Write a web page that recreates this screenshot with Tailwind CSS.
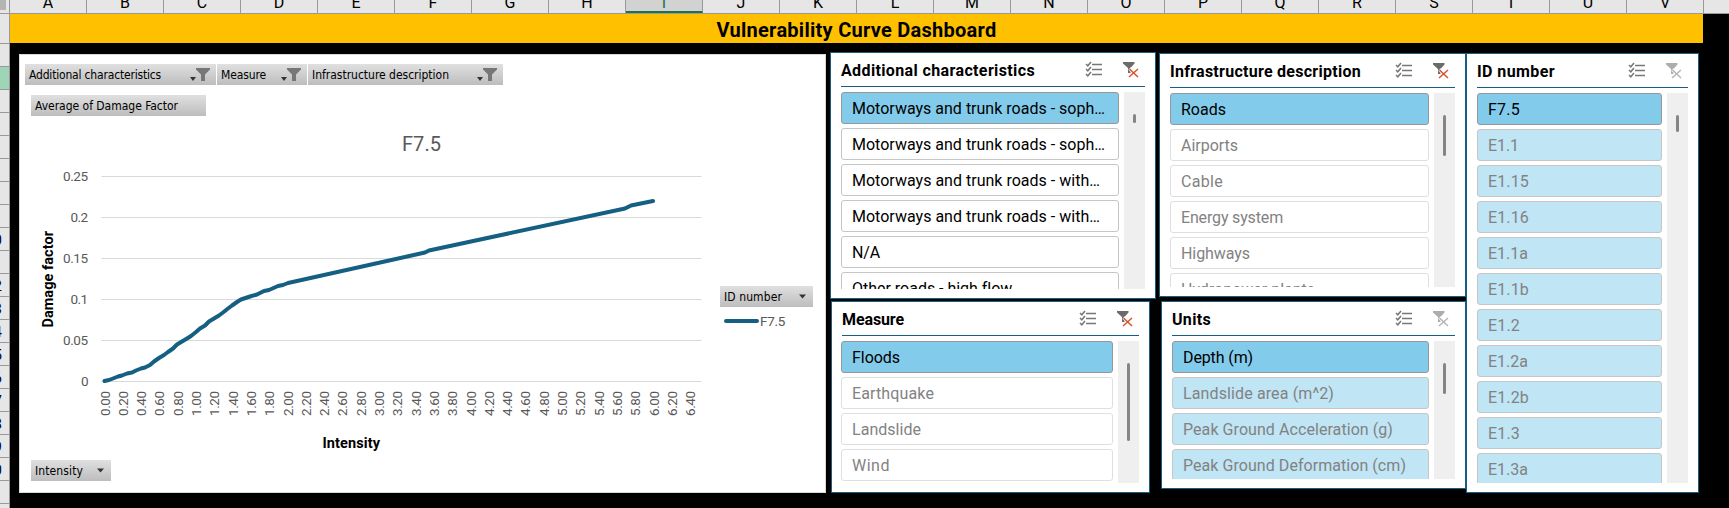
<!DOCTYPE html>
<html lang="en">
<head>
<meta charset="utf-8">
<title>Vulnerability Curve Dashboard</title>
<script src="https://cdn.jsdelivr.net/npm/@tailwindcss/browser@4"></script>
</head>
<body class="w-[1729px] h-[508px] overflow-hidden bg-black font-[Roboto,sans-serif] text-black">
<div class="flex h-[14px] overflow-hidden bg-[#e6e6e6] border-b border-[#999]">
  <div class="w-[10px] shrink-0 border-r border-[#999]"><div class="w-[6px] h-[10px] bg-[#b4b4b4]"></div></div>
  <div id="cols" class="flex h-[13px]"></div>
</div>
<div class="flex h-[494px]">
  <div id="rows" class="w-[10px] shrink-0 bg-[#e6e6e6] border-r border-[#999] overflow-hidden"></div>
  <div class="flex-1">
    <div class="w-[1693px] h-[29px] bg-[#ffc000] flex justify-center">
      <h1 class="text-[20px] font-bold leading-[32px] whitespace-nowrap" data-w="280">Vulnerability Curve Dashboard</h1>
    </div>
    <main class="flex items-start">
      <section class="ml-[9px] mt-[11px] w-[807px] h-[439px] bg-white border border-[#d9d9d9] pt-[9px] font-['DejaVu_Sans_Condensed','DejaVu_Sans',sans-serif] text-[12px]">
        <div class="flex gap-px pl-[5px]">
          <div class="w-[191px] h-[21px] bg-linear-to-b from-[#e0e0e0] to-[#bdbdbd] flex items-center justify-between pl-[4px] pr-[5px]"><span data-w="132">Additional characteristics</span><svg width="21" height="15"><path d="M0 10h6l-3 4z" fill="#333"/><path d="M6 1h14v1.500l-5 5V14h-4V7.500l-5-5z" fill="#777"/></svg></div>
          <div class="w-[90px] h-[21px] bg-linear-to-b from-[#e0e0e0] to-[#bdbdbd] flex items-center justify-between pl-[4px] pr-[5px]"><span data-w="45">Measure</span><svg width="21" height="15"><path d="M0 10h6l-3 4z" fill="#333"/><path d="M6 1h14v1.500l-5 5V14h-4V7.500l-5-5z" fill="#777"/></svg></div>
          <div class="w-[195px] h-[21px] bg-linear-to-b from-[#e0e0e0] to-[#bdbdbd] flex items-center justify-between pl-[4px] pr-[5px]"><span data-w="137">Infrastructure description</span><svg width="21" height="15"><path d="M0 10h6l-3 4z" fill="#333"/><path d="M6 1h14v1.500l-5 5V14h-4V7.500l-5-5z" fill="#777"/></svg></div>
        </div>
        <div class="ml-[11px] mt-[10px] w-[175px] h-[21px] bg-linear-to-b from-[#e0e0e0] to-[#bdbdbd] flex items-center pl-[4px]"><span data-w="143">Average of Damage Factor</span></div>
        <div class="flex h-[344px]">
          <svg id="chart" class="shrink-0" width="700" height="344" viewBox="20 116 700 344" font-family="Roboto, sans-serif" font-size="13.5" fill="#595959">
            <text x="402" y="151" font-size="20" textLength="39">F7.5</text>
            <g id="grid"></g>
            <polyline fill="none" stroke="#156082" stroke-width="4" stroke-linecap="round" stroke-linejoin="round" points="104.500,381 109,380 113,378.500 118,376.500 122,375.500 127,373.500 132,372.500 136,370.500 141,368.500 145,367.500 150,365 154,361.500 159,358 164,355 168,352 173,348.500 177,344.500 182,341.500 187,338.500 191,336 196,332 200,328.500 205,325.500 209,321.500 214,318.500 219,315.500 223,312.500 228,308.500 232,305.500 237,302 241,299.500 250,296.500 257,294.500 264,291 269,290 278,286 283,285 288,283 425,252.500 429,250.500 443,247.500 625,208.500 631,205.500 653,201"/>
            <text transform="translate(53 327.500) rotate(-90)" font-size="14.500" font-weight="700" fill="#000" textLength="96.500">Damage factor</text>
            <text x="322.500" y="448" font-size="14.500" font-weight="700" fill="#000" textLength="57.500">Intensity</text>
          </svg>
          <div class="pt-[170px]">
            <div class="w-[93px] h-[21px] bg-linear-to-b from-[#e0e0e0] to-[#bdbdbd] flex items-center justify-between pl-[4px] pr-[7px]"><span data-w="58">ID number</span><svg width="7" height="5"><path d="M0 0.500h7l-3.500 4z" fill="#333"/></svg></div>
            <div class="flex items-center pl-[4px] pt-[4px] text-[13.5px] text-[#595959] font-[Roboto,sans-serif]"><div class="w-[35px] h-[4px] rounded-full bg-[#156082] mr-[1px] -mt-px"></div><span data-w="25">F7.5</span></div>
          </div>
        </div>
        <div class="ml-[11px] w-[80px] h-[21px] bg-linear-to-b from-[#e0e0e0] to-[#bdbdbd] flex items-center justify-between pl-[4px] pr-[7px]"><span data-w="48">Intensity</span><svg width="7" height="5"><path d="M0 0.500h7l-3.500 4z" fill="#333"/></svg></div>
      </section>
      <div class="ml-[4px] w-[326px]">
        <section id="additional" class="mt-[9px] w-[326px] h-[247px]"></section>
        <section id="measure" class="mt-[2px] ml-px w-[319px] h-[192px]"></section>
      </div>
      <div class="ml-[3px] w-[307px]">
        <section id="infra" class="mt-[10px] w-[307px] h-[244px]"></section>
        <section id="units" class="mt-[4px] ml-[2px] w-[305px] h-[188px]"></section>
      </div>
      <section id="idnumber" class="mt-[10px] w-[233px] h-[440px]"></section>
    </main>
  </div>
</div>
<script>
const $ = id => document.getElementById(id);

// Sheet headers
$('cols').innerHTML = [...'ABCDEFGHIJKLMNOPQRSTUV'].map(c => c === 'I'
  ? `<div class="w-[77px] h-[13px] border-r border-[#999] bg-[#d2d2d2] border-b-2 border-b-[#217346] flex justify-center"><span class="text-[16px] leading-[20px] -mt-[7px] text-[#217346]">${c}</span></div>`
  : `<div class="w-[77px] h-[13px] border-r border-[#999] flex justify-center"><span class="text-[16px] leading-[20px] -mt-[7px]">${c}</span></div>`).join('');
let rows = '<div class="h-[30px] border-b border-[#999]"></div>';
for (let r = 2; r <= 22; r++) {
  rows += `<div class="${r === 3 ? 'h-[23px] border-b border-[#999] bg-[#9fd5b7]' : 'h-[23px] border-b border-[#999] flex justify-end pr-[7px] text-[15px] leading-[24px] text-[#000040]'}">${r > 9 ? r : ''}</div>`;
}
$('rows').innerHTML = rows;

// Chart grid and axis labels
let g = '';
['0.25', '0.2', '0.15', '0.1', '0.05', '0'].forEach((t, i) => {
  const y = 176 + i * 41, w = { 4: 25, 3: 17.5, 1: 7 }[t.length];
  g += `<path d="M101.500 ${y + .5}H701.500" stroke="#d9d9d9"/><text x="${88 - w}" y="${y + 5}" textLength="${w}">${t}</text>`;
});
for (let i = 0; i <= 32; i++) {
  g += `<text transform="translate(${109.5 + i * 18.3} 416) rotate(-90)" textLength="25">${(i * .2).toFixed(2)}</text>`;
}
$('grid').innerHTML = g;

// Slicers
const listIcon = `<svg class="shrink-0" width="18" height="17" fill="none" stroke="#777" stroke-width="1.300"><path d="M7 3.500h10M7 8.500h10M7 13.500h10"/><path d="M1 3l1.800 1.800L6 1M1 8l1.800 1.800L6 6M1 13l1.800 1.800L6 11" stroke-width="1.500"/></svg>`;
const filterIcon = on => `<svg class="shrink-0" width="17" height="17"><path d="M0 1h11.500v1.500L7.500 7v5H5V7L0 2.500z" fill="${on ? '#6b6b6b' : '#adadad'}"/><path d="M6.500 7.500l8.500 8M15 8l-9 8" stroke="#fff" stroke-width="3.500"/><path d="M6.500 8l8.500 8M15 8l-9 8" stroke="${on ? '#d9532c' : '#b5b5b5'}" stroke-width="1.500" fill="none"/></svg>`;
const styles = {
  sel: 'h-[32px] shrink-0 rounded-[3px] border border-[#979797] bg-[#83cbeb] pl-[10px] text-[16px] leading-[31px] whitespace-nowrap',
  on: 'h-[32px] shrink-0 rounded-[3px] border border-[#c6c6c6] bg-white pl-[10px] text-[16px] leading-[31px] whitespace-nowrap',
  off: 'h-[32px] shrink-0 rounded-[3px] border border-[#dfdfdf] bg-white pl-[10px] text-[16px] leading-[31px] whitespace-nowrap text-[#828282]',
  pale: 'h-[32px] shrink-0 rounded-[3px] border border-[#c6c6c6] bg-[#c0e5f5] pl-[10px] text-[16px] leading-[31px] whitespace-nowrap text-[#828282]'
};
function slicer(id, title, tw, filtered, thumb, items) {
  const el = $(id);
  el.className += ' bg-white border border-[#156082] px-[10px] pb-[9px] flex flex-col';
  el.innerHTML = `<header class="h-[34px] shrink-0 border-b border-[#156082] flex">
      <h2 class="flex-1 text-[16px] font-bold leading-[36px] whitespace-nowrap"><span data-w="${tw}">${title}</span></h2>
      <div class="flex gap-[20px] pt-[8px] pr-[5px]">${listIcon}${filterIcon(filtered)}</div>
    </header>
    <div class="flex-1 min-h-0 mt-[5px] flex gap-[5px]">
      <div class="${id === 'measure' ? 'flex-1 -ml-px flex flex-col gap-[4px] overflow-hidden' : 'flex-1 flex flex-col gap-[4px] overflow-hidden'}">${items.map(([s, t, w]) => `<div class="${styles[s]}"><span data-w="${w}">${t}</span></div>`).join('')}</div>
      <div class="w-[21px] bg-[#efefef] pt-[22px] pl-[9px]"><div class="w-[3px] rounded-full bg-[#858585]" style="height:${thumb}px"></div></div>
    </div>`;
}
slicer('additional', 'Additional characteristics', 194, true, 9, [
  ['sel', 'Motorways and trunk roads - soph…', 253], ['on', 'Motorways and trunk roads - soph…', 253],
  ['on', 'Motorways and trunk roads - with…', 248], ['on', 'Motorways and trunk roads - with…', 248],
  ['on', 'N/A', 28], ['on', 'Other roads - high flow', 160]]);
slicer('measure', 'Measure', 62, true, 78, [
  ['sel', 'Floods', 48], ['off', 'Earthquake', 82], ['off', 'Landslide', 69], ['off', 'Wind', 38]]);
slicer('infra', 'Infrastructure description', 191, true, 41, [
  ['sel', 'Roads', 45], ['off', 'Airports', 57], ['off', 'Cable', 42], ['off', 'Energy system', 102],
  ['off', 'Highways', 69], ['off', 'Hydropower plants', 134]]);
slicer('units', 'Units', 39, false, 31, [
  ['sel', 'Depth (m)', 70], ['pale', 'Landslide area (m^2)', 151],
  ['pale', 'Peak Ground Acceleration (g)', 210], ['pale', 'Peak Ground Deformation (cm)', 223]]);
slicer('idnumber', 'ID number', 78, false, 17, [
  ['sel', 'F7.5', 32], ['pale', 'E1.1', 31], ['pale', 'E1.15', 41], ['pale', 'E1.16', 41], ['pale', 'E1.1a', 40],
  ['pale', 'E1.1b', 41], ['pale', 'E1.2', 32], ['pale', 'E1.2a', 40], ['pale', 'E1.2b', 41], ['pale', 'E1.3', 32], ['pale', 'E1.3a', 40]]);

// Spread each label's letters over its set width
function fit() {
  document.querySelectorAll('[data-w]').forEach(el => {
    el.style.display = 'inline-block';
    el.style.whiteSpace = 'nowrap';
    el.style.letterSpacing = '0px';
    const extra = el.dataset.w - el.getBoundingClientRect().width;
    el.style.letterSpacing = extra / el.textContent.length + 'px';
  });
}
fit();
addEventListener('load', () => { fit(); requestAnimationFrame(fit); document.fonts.ready.then(fit); });
new ResizeObserver(fit).observe(document.querySelector('h1').parentElement);
</script>
</body>
</html>
